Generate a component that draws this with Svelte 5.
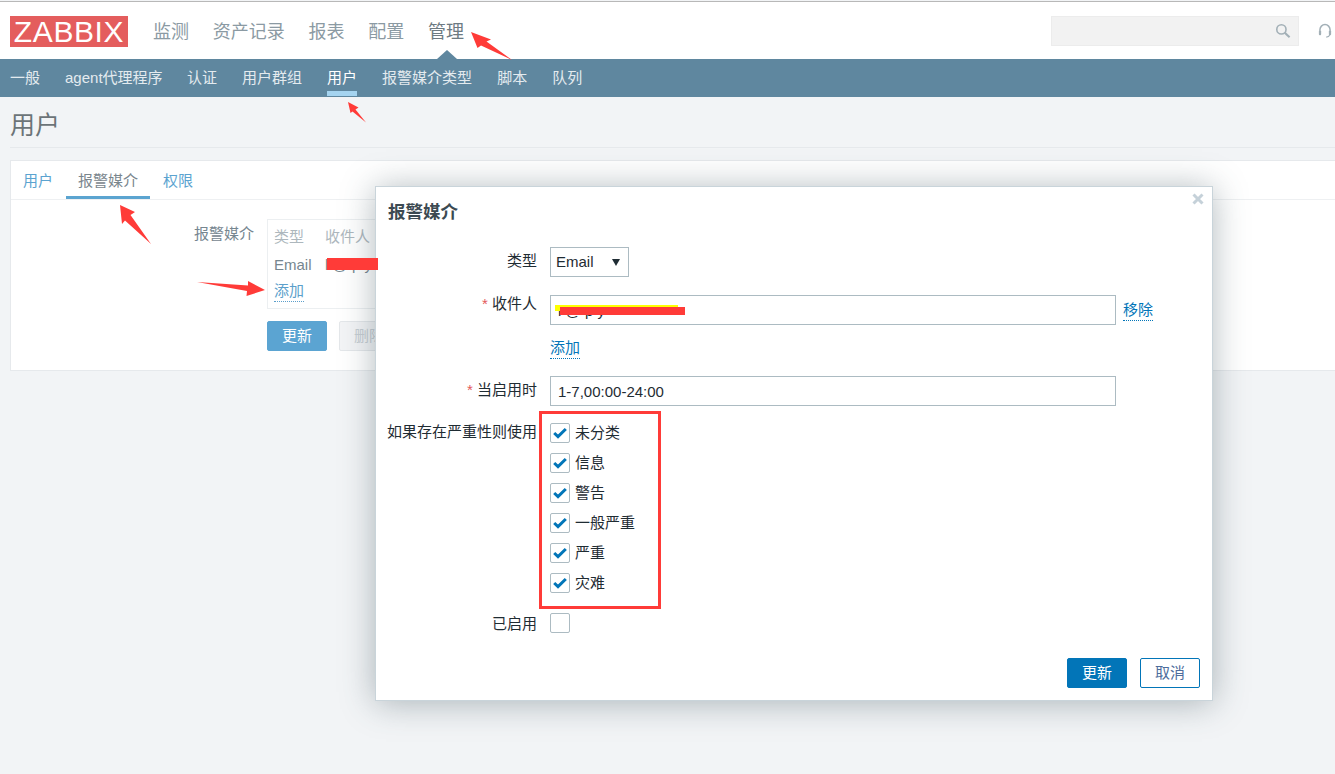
<script>
  const menu = [
    { label: '监测' }, { label: '资产记录' }, { label: '报表' }, { label: '配置' }, { label: '管理', active: true }
  ];
  const sub = [
    { label: '一般' }, { label: 'agent代理程序' }, { label: '认证' }, { label: '用户群组' },
    { label: '用户', active: true }, { label: '报警媒介类型' }, { label: '脚本' }, { label: '队列' }
  ];
  const tabs = [
    { label: '用户' }, { label: '报警媒介', active: true }, { label: '权限' }
  ];
  const severities = ['未分类', '信息', '警告', '一般严重', '严重', '灾难'];
</script>

<div class="page">
  <header class="top">
    <div class="logo">ZABBIX</div>
    <nav class="menu">
      {#each menu as m}
        <a class="menu-item" class:active={m.active}>{m.label}</a>
      {/each}
    </nav>
    <div class="tools">
      <div class="search">
        <input class="search-input" />
        <svg class="search-icon" width="16" height="16" viewBox="0 0 18 18" fill="none" stroke="#a3b0b7">
          <circle cx="7.2" cy="7.2" r="5.2" stroke-width="1.8" />
          <path d="M11 11l5.4 5" stroke-width="2.4" />
        </svg>
      </div>
      <svg class="headset" width="14" height="16" viewBox="0 0 16 18" fill="none" stroke="#a3b0b7">
        <path d="M2.2 10V7.5a5.8 5.8 0 0 1 11.6 0V10" stroke-width="1.7" />
        <rect x="1" y="8.6" width="2.6" height="5.2" rx="1" fill="#a3b0b7" stroke="none" />
        <rect x="12.4" y="8.6" width="2.6" height="5.2" rx="1" fill="#a3b0b7" stroke="none" />
        <path d="M13.4 13.6c-.6 1.8-2 2.4-4 2.4" stroke-width="1.2" />
      </svg>
    </div>
  </header>

  <nav class="subnav">
    {#each sub as s}
      <a class="sub-item" class:active={s.active}>{s.label}</a>
    {/each}
  </nav>

  <main class="content">
    <h1 class="title">用户</h1>
    <section class="card">
      <div class="tabs">
        {#each tabs as t}
          <a class="tab" class:active={t.active}>{t.label}</a>
        {/each}
      </div>
      <div class="card-body">
        <div class="card-label">报警媒介</div>
        <div class="card-main">
          <div class="media-box">
            <div class="media-row head"><span class="c1">类型</span><span>收件人</span></div>
            <div class="media-row"><span class="c1">Email</span><span>l @ p y</span></div>
            <div class="media-row"><a class="dotted soft">添加</a></div>
          </div>
          <div class="card-actions">
            <button class="btn soft-primary">更新</button>
            <button class="btn disabled">删除</button>
          </div>
        </div>
      </div>
    </section>
  </main>

  <div class="modal">
    <svg class="close" width="12" height="12" viewBox="0 0 12 12" stroke="#c5d1d9" stroke-width="3">
      <path d="M1.5 1.5l9 9M10.5 1.5l-9 9" />
    </svg>
    <h2 class="modal-title">报警媒介</h2>
    <div class="form">
      <div class="row r-type">
        <label class="lbl mid">类型</label>
        <div class="select-wrap">
          <select class="select"><option>Email</option></select>
        </div>
      </div>
      <div class="row r-to">
        <label class="lbl high"><span class="req">*</span> 收件人</label>
        <div class="ctl">
          <input class="input" value="l @ p y" />
          <a class="dotted strong">移除</a>
        </div>
      </div>
      <div class="row r-add">
        <span class="lbl"></span>
        <a class="dotted strong">添加</a>
      </div>
      <div class="row r-time">
        <label class="lbl mid"><span class="req">*</span> 当启用时</label>
        <input class="input" value="1-7,00:00-24:00" />
      </div>
      <div class="row r-sev">
        <label class="lbl sev-lbl">如果存在严重性则使用</label>
        <ul class="sevs">
          {#each severities as s}
            <li class="sev">
              <span class="box">
                <svg width="14" height="12" viewBox="0 0 14 12" fill="none" stroke="#0275b8" stroke-width="3">
                  <path d="M1.2 6l3.8 3.6L12.8 2" />
                </svg>
              </span>
              {s}
            </li>
          {/each}
        </ul>
      </div>
      <div class="row r-enabled">
        <label class="lbl en-lbl">已启用</label>
        <span class="box"></span>
      </div>
    </div>
    <div class="modal-actions">
      <button class="btn primary">更新</button>
      <button class="btn outline">取消</button>
    </div>
  </div>

  <svg class="marks" width="1335" height="774" viewBox="0 0 1335 774">
    <g fill="#ff3b38">
      <path d="M471 32L491 39.500L486.500 41.500L512 60L481 45.500L477.500 48Z" />
      <path d="M348 102L358.500 107.500L355.500 109.500L366 122.500L352.500 111.500L350.500 113Z" />
      <path d="M120 205L135 212L130.500 215L151 244L125 220.500L122 224Z" />
      <path d="M265 290L248 281L248 285.500L197 282L247 291L246.500 296Z" />
      <rect x="327" y="258" width="51" height="12" />
    </g>
    <rect x="555" y="305" width="123" height="6" fill="#ffff00" />
    <rect x="560" y="307" width="125" height="8" fill="#ff3b38" />
    <rect x="540.500" y="412.500" width="119" height="195" fill="none" stroke="#ff3b38" stroke-width="3" />
  </svg>
</div>

<style>
  :global(body) {
    margin: 0;
    background: #f2f4f6;
  }
  .page {
    position: relative;
    width: 1335px;
    height: 774px;
    overflow: hidden;
    padding-top: 1px;
    box-sizing: border-box;
    font: 15px/20px "Liberation Sans", "Noto Sans CJK SC", sans-serif;
    color: #1f2c33;
    background: #f2f4f6;
  }
  a { text-decoration: none; }

  .top {
    box-sizing: border-box;
    height: 58px;
    display: flex;
    align-items: flex-start;
    background: #fff;
    border-top: 1px solid #b8b8b8;
    padding-left: 10px;
  }
  .logo {
    box-sizing: border-box;
    width: 118px;
    height: 31px;
    margin-top: 14px;
    background: #e45d5d;
    color: #fff;
    font-size: 30px;
    line-height: 31px;
    text-align: center;
    letter-spacing: .6px;
  }
  .menu {
    display: flex;
    gap: 23.750px;
    margin-left: 25px;
    height: 57px;
  }
  .menu-item {
    position: relative;
    font-size: 18px;
    line-height: 24px;
    padding-top: 18px;
    color: #8b9aa3;
  }
  .menu-item.active { color: #6d7a82; }
  .menu-item.active::after {
    content: "";
    position: absolute;
    left: 9px;
    bottom: 0;
    border: solid transparent;
    border-width: 0 10px 9px;
    border-bottom-color: #5f879f;
  }
  .tools {
    margin-left: auto;
    display: flex;
    align-items: flex-start;
    gap: 19px;
    padding: 14px 3px 0 0;
  }
  .search { position: relative; height: 30px; }
  .search-input {
    display: block;
    box-sizing: border-box;
    width: 248px;
    height: 30px;
    background: #f2f2f2;
    border: 1px solid #ececec;
    outline: 0;
  }
  .search-icon { position: absolute; right: 8px; top: 7px; }
  .headset { margin-top: 7px; }

  .subnav {
    box-sizing: border-box;
    height: 38px;
    display: flex;
    gap: 25px;
    padding-left: 10px;
    background: #5f879f;
  }
  .sub-item {
    height: 37px;
    line-height: 37px;
    color: #e4ebef;
    white-space: nowrap;
  }
  .sub-item:nth-child(2) { margin-right: -.5px; }
  .sub-item.active {
    box-sizing: border-box;
    height: 37px;
    color: #fff;
    border-bottom: 5px solid #a5d4f0;
  }

  .content { padding: 0 0 0 10px; }
  .title {
    box-sizing: border-box;
    margin: 0 0 12px;
    height: 51px;
    font-size: 25px;
    line-height: 57px;
    font-weight: 400;
    color: #6c7478;
    border-bottom: 1px solid #e6e9ec;
  }
  .card {
    box-sizing: border-box;
    height: 211px;
    background: #fff;
    border: 1px solid #e6e9ec;
    border-right: 0;
  }
  .tabs {
    display: flex;
    gap: 1px;
    height: 38px;
    border-bottom: 1px solid #eef0f2;
  }
  .tab {
    box-sizing: border-box;
    height: 38px;
    padding: 0 12px;
    line-height: 39px;
    color: #5ba3d0;
  }
  .tab.active {
    color: #7a868d;
    border-bottom: 3px solid #5ba4d0;
  }
  .card-body {
    display: flex;
    gap: 13px;
    padding-top: 19px;
  }
  .card-label {
    width: 243px;
    text-align: right;
    color: #768690;
    line-height: 30px;
  }
  .media-box {
    box-sizing: border-box;
    width: 500px;
    height: 90px;
    padding: 3px 6px;
    border: 1px solid #eceff1;
  }
  .media-row {
    display: flex;
    height: 27.500px;
    line-height: 27px;
    color: #76868f;
  }
  .media-row.head { color: #adb7bd; }
  .c1 { width: 51px; }
  .dotted {
    height: 19px;
    line-height: 18px;
    border-bottom: 1px dotted #0275b8;
  }
  .dotted.soft {
    align-self: flex-start;
    margin-top: 4px;
    color: #5c9fcb;
    border-bottom-color: #5c9fcb;
  }
  .dotted.strong { color: #0275b8; }
  .card-actions {
    display: flex;
    gap: 12px;
    margin-top: 12px;
  }
  .btn {
    box-sizing: border-box;
    width: 60px;
    height: 30px;
    padding: 0;
    border-radius: 2px;
    border: 1px solid #0275b8;
    font: inherit;
  }
  .soft-primary { background: #5ba4d2; border-color: #5ba4d2; color: #fff; }
  .disabled { background: #f3f4f6; border-color: #e4e7ea; color: #c6cdd2; }
  .primary { background: #0275b8; color: #fff; }
  .outline { background: #fff; color: #4d6c9c; }

  .modal {
    position: absolute;
    left: 375px;
    top: 186px;
    box-sizing: border-box;
    width: 838px;
    height: 515px;
    background: #fff;
    border: 1px solid #c9d4da;
    box-shadow: 0 2px 32px rgba(60, 80, 90, .4);
  }
  .close { position: absolute; right: 8px; top: 6px; }
  .modal-title {
    margin: 0;
    padding: 14px 0 0 12px;
    height: 46px;
    font-size: 17.500px;
    line-height: 22px;
    font-weight: 700;
    color: #3c4a52;
  }
  .form { display: flex; flex-direction: column; }
  .row { display: flex; gap: 13px; align-items: flex-start; }
  .lbl {
    flex: none;
    width: 150px;
    margin-left: 11px;
    text-align: right;
    white-space: nowrap;
    color: #1f2c33;
  }
  .lbl.mid { line-height: 28px; }
  .lbl.high { line-height: 18px; }
  .lbl.sev-lbl { line-height: 18px; }
  .lbl.en-lbl { line-height: 22px; }
  .req { color: #e45959; }
  .r-to { margin-top: 18px; }
  .r-add { margin-top: 14px; height: 37px; }
  .r-sev { margin-top: 17px; }
  .r-enabled { margin-top: 20px; }
  .ctl { display: flex; gap: 7px; align-items: flex-start; }
  .ctl .dotted { margin-top: 6px; }
  .input {
    display: block;
    box-sizing: border-box;
    width: 566px;
    height: 30px;
    padding: 0 7px;
    border: 1px solid #acbbc2;
    outline: 0;
    background: #fff;
    color: #1f2c33;
    font: inherit;
  }
  .select-wrap { position: relative; width: 79px; }
  .select-wrap::after {
    content: "";
    position: absolute;
    right: 9px;
    top: 12px;
    border: solid transparent;
    border-width: 7px 4px 0;
    border-top-color: #1f2c33;
  }
  .select {
    display: block;
    box-sizing: border-box;
    width: 79px;
    height: 30px;
    padding: 0 5px;
    appearance: none;
    border: 1px solid #acbbc2;
    border-radius: 0;
    background: #fff;
    color: #1f2c33;
    font: inherit;
    outline: 0;
  }
  .sevs {
    list-style: none;
    margin: 0;
    padding: 0;
    display: flex;
    flex-direction: column;
    gap: 10px;
  }
  .sev { display: flex; gap: 5px; height: 20px; line-height: 20px; white-space: nowrap; }
  .box {
    box-sizing: border-box;
    display: flex;
    align-items: center;
    justify-content: center;
    width: 20px;
    height: 20px;
    border: 1px solid #acbbc2;
    border-radius: 2px;
    background: #fff;
  }
  .modal-actions {
    position: absolute;
    right: 12px;
    bottom: 12px;
    display: flex;
    gap: 13px;
  }
  .marks {
    position: absolute;
    left: 0;
    top: 0;
    pointer-events: none;
  }
</style>
